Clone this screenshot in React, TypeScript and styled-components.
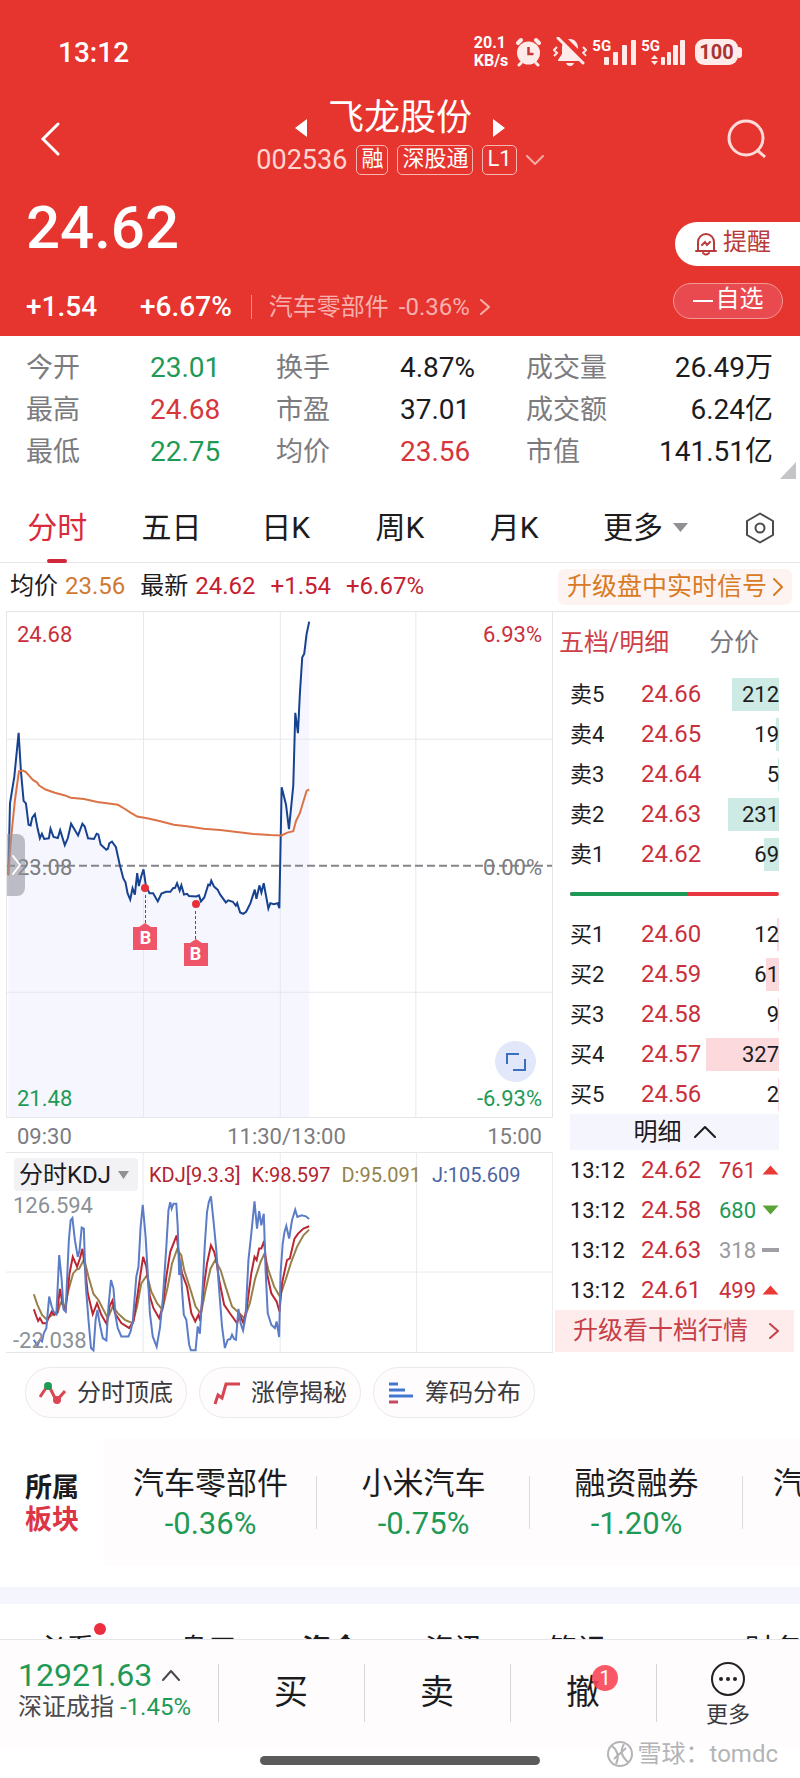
import React from "react";
import styled, { createGlobalStyle } from "styled-components";

const RED = "#c9303c";
const GREEN = "#1f9a56";
const ORANGE = "#cf7a34";
const GRAY = "#7c7c80";
const INK = "#1c1c1e";
const LINE = "#e6e6ea";
const FONT = 'Roboto, "Noto Sans CJK SC", sans-serif';

const GlobalStyle = createGlobalStyle`
  *, *::before, *::after { box-sizing: border-box; }
  body { margin: 0; background: #fff; color: ${INK}; font-family: ${FONT}; }
  button, select { font-family: inherit; font-size: inherit; color: inherit; border: 0; padding: 0; background: none; }
  svg { display: block; flex: none; }
  dl, dd, ul { margin: 0; padding: 0; list-style: none; }
  a { color: inherit; text-decoration: none; }
`;

const Page = styled.main`
  width: 100%;
  overflow: hidden;
  white-space: nowrap;
`;

/* ---------- header ---------- */

const Header = styled.header`
  background: #e6342e;
  color: #fff;
`;

const StatusBar = styled.div`
  height: 96px;
  padding: 8px 58px 0 58px;
  display: flex;
  align-items: center;
  justify-content: space-between;
`;

const Clock = styled.time`
  font-size: 28px;
  font-weight: 500;
`;

const StatusIcons = styled.div`
  display: flex;
  align-items: center;
  gap: 5px;
`;

const NetSpeed = styled.div`
  margin-right: 2px;
  font-size: 16px;
  line-height: 18px;
  font-weight: 700;
`;

const Silent = styled.div`
  margin-left: 6px;
`;

const Signal = styled.div`
  display: flex;
  align-items: flex-start;
  font-size: 15px;
  line-height: 15px;
  font-weight: 700;
  svg { margin-left: -9px; }
`;

const Battery = styled.div`
  display: flex;
  align-items: center;
  margin-left: 5px;
  span {
    background: #ffecea;
    color: #a83430;
    border-radius: 9px;
    width: 43px;
    height: 26px;
    line-height: 26px;
    font-size: 20px;
    font-weight: 700;
    text-align: center;
  }
  &::after {
    content: "";
    width: 4px;
    height: 11px;
    background: #ffecea;
    border-radius: 0 3px 3px 0;
  }
`;

const Nav = styled.nav`
  display: grid;
  grid-template-columns: 100px 1fr 106px;
  align-items: center;
  height: 86px;
`;

const IconButton = styled.button`
  justify-self: center;
  display: block;
`;

const TitleBlock = styled.div`
  display: flex;
  flex-direction: column;
  align-items: center;
  padding-left: 6px;
`;

const TitleRow = styled.div`
  display: flex;
  align-items: center;
  gap: 20px;
  height: 42px;
  button { padding-top: 20px; }
`;

const Title = styled.h1`
  margin: 0;
  font-size: 36px;
  line-height: 42px;
  font-weight: 400;
`;

const CodeRow = styled.div`
  display: flex;
  align-items: center;
  gap: 9px;
  height: 42px;
  font-size: 27px;
  color: #ffd5d2;
`;

const Tag = styled.span`
  height: 30px;
  padding: 0 4px;
  border: 1px solid #f7b5b1;
  border-radius: 5px;
  font-size: 22px;
  line-height: 26px;
  color: #fff;
`;

const Quote = styled.section`
  display: flex;
  justify-content: space-between;
`;

const Price = styled.div`
  height: 92px;
  padding-left: 26px;
  font-size: 60px;
  line-height: 92px;
  font-weight: 500;
`;

const ChangeRow = styled.div`
  display: flex;
  align-items: center;
  height: 62px;
  padding: 3px 0 0 26px;
  font-size: 28px;
  font-weight: 500;
  gap: 43px;
`;

const Sector = styled.a`
  display: flex;
  align-items: center;
  gap: 10px;
  margin-left: -24px;
  padding-left: 17px;
  border-left: 1px solid #f08e89;
  line-height: 24px;
  font-size: 24px;
  font-weight: 400;
  color: #f9b0ac;
`;

const QuoteActions = styled.div`
  display: flex;
  flex-direction: column;
  align-items: flex-end;
  gap: 17px;
  padding-top: 40px;
`;

const AlertButton = styled.button`
  display: flex;
  align-items: center;
  gap: 5px;
  width: 125px;
  height: 44px;
  padding-left: 19px;
  border-radius: 22px 0 0 22px;
  background: #fff;
  color: #b93a3a;
  font-size: 24px;
  line-height: 24px;
  span { padding-bottom: 4px; }
`;

const WatchButton = styled.button`
  display: flex;
  align-items: center;
  justify-content: center;
  gap: 3px;
  width: 110px;
  height: 36px;
  margin-right: 17px;
  border: 1px solid #f29a96;
  border-radius: 18px;
  background: #e84a50;
  color: #fff;
  font-size: 24px;
  line-height: 24px;
  span { padding-bottom: 4px; }
`;

/* ---------- statistics ---------- */

const Stats = styled.dl`
  position: relative;
  display: grid;
  grid-template-columns: 250fr 250fr 247fr;
  padding: 11px 27px 12px 26px;
`;

const Stat = styled.div<{ $spread?: boolean }>`
  display: flex;
  justify-content: ${(p) => (p.$spread ? "space-between" : "flex-start")};
  height: 42px;
  line-height: 42px;
  font-size: 27px;
  dt { width: ${(p) => (p.$spread ? "auto" : "124px")}; color: ${GRAY}; }
`;

const Value = styled.dd<{ $color?: string }>`
  color: ${(p) => p.$color || INK};
  font-size: 28px;
`;

const Corner = styled.svg`
  position: absolute;
  right: 4px;
  bottom: 6px;
`;

/* ---------- period tabs ---------- */

const Periods = styled.div`
  display: grid;
  grid-template-columns: repeat(5, 114fr) 148fr 80fr;
  height: 78px;
  border-bottom: 1px solid ${LINE};
`;

const Period = styled.button<{ $active?: boolean }>`
  position: relative;
  display: flex;
  align-items: center;
  justify-content: center;
  gap: 10px;
  padding-top: 2px;
  font-size: 30px;
  color: ${(p) => (p.$active ? "#d9293c" : INK)};
  svg { margin-top: 6px; }
  &::after {
    content: "";
    display: ${(p) => (p.$active ? "block" : "none")};
    position: absolute;
    bottom: -1px;
    width: 20px;
    height: 4px;
    border-radius: 2px;
    background: #d0283a;
  }
`;

const InfoBar = styled.div`
  display: flex;
  align-items: center;
  justify-content: space-between;
  height: 48px;
  padding: 0 8px 0 10px;
  font-size: 24px;
`;

const Readings = styled.div`
  display: flex;
  align-items: baseline;
  gap: 15px;
  padding-bottom: 2px;
  line-height: 32px;
`;

const Reading = styled.span<{ $color?: string }>`
  color: ${(p) => p.$color || "#c5202f"};
  b { font-weight: 400; color: ${INK}; margin-right: 7px; }
`;

const SignalLink = styled.a`
  display: flex;
  align-items: center;
  gap: 6px;
  height: 36px;
  padding: 0 9px;
  border-radius: 6px;
  background: #fdf4f2;
  color: #d97a25;
  font-size: 25px;
  line-height: 32px;
`;

/* ---------- chart area ---------- */

const Market = styled.section`
  display: grid;
  grid-template-columns: minmax(0, 553fr) minmax(0, 247fr);
`;

const Charts = styled.div`
  padding-left: 6px;
`;

const PriceChart = styled.div`
  position: relative;
  height: 507px;
  border: 1px solid ${LINE};
  > svg { width: 100%; height: 100%; }
`;

const ChartLabel = styled.span<{ $color: string; $top: string; $right?: boolean }>`
  position: absolute;
  top: ${(p) => p.$top};
  ${(p) => (p.$right ? "right: 10px;" : "left: 10px;")}
  color: ${(p) => p.$color};
  font-size: 22px;
  line-height: 28px;
`;

const Buy = styled.span<{ $left: string; $top: string }>`
  position: absolute;
  left: ${(p) => p.$left};
  top: ${(p) => p.$top};
  display: flex;
  flex-direction: column;
  align-items: center;
  width: 24px;
  margin-left: -12px;
  i {
    width: 8px;
    height: 8px;
    border-radius: 50%;
    background: #e8303a;
  }
  u {
    height: 28px;
    margin-top: 3px;
    border-left: 1px dashed #a03050;
  }
  svg { fill: #ee5568; }
  b {
    width: 24px;
    height: 23px;
    background: #ee5568;
    color: #fff;
    font-size: 18px;
    line-height: 22px;
    text-align: center;
  }
`;

const Handle = styled.button`
  position: absolute;
  left: 0;
  top: 222px;
  display: flex;
  align-items: center;
  justify-content: center;
  width: 18px;
  height: 62px;
  border-radius: 0 8px 8px 0;
  background: rgba(150, 150, 160, 0.6);
`;

const Expand = styled.button`
  position: absolute;
  right: 16px;
  bottom: 35px;
  display: flex;
  align-items: center;
  justify-content: center;
  width: 41px;
  height: 41px;
  border-radius: 50%;
  background: #e2e8f9;
`;

const Axis = styled.div`
  display: grid;
  grid-template-columns: 1fr 1fr 1fr;
  height: 35px;
  padding: 0 11px;
  border-bottom: 1px solid ${LINE};
  font-size: 22px;
  line-height: 37px;
  color: ${GRAY};
  span:nth-child(2) { text-align: center; padding-left: 14px; }
  span:nth-child(3) { text-align: right; }
`;

const KdjChart = styled.div`
  position: relative;
  height: 200px;
  border-bottom: 1px solid ${LINE};
  > svg { width: 100%; height: 100%; }
  > ${ChartLabel} { left: 7px; }
`;

const KdjHead = styled.div`
  position: absolute;
  left: 8px;
  top: 5px;
  display: flex;
  align-items: center;
  gap: 11px;
  font-size: 20px;
`;

const KdjPicker = styled.button`
  display: flex;
  align-items: center;
  gap: 7px;
  height: 33px;
  width: 124px;
  padding: 0 5px;
  border-radius: 4px;
  background: #f2f1f3;
  font-size: 24px;
  line-height: 30px;
`;

const KdjValue = styled.span<{ $color: string }>`
  color: ${(p) => p.$color};
`;

/* ---------- order book ---------- */

const Book = styled.div`
  border-top: 1px solid ${LINE};
  padding: 0 21px 0 17px;
`;

const BookTabs = styled.div`
  display: flex;
  gap: 40px;
  height: 62px;
  margin-left: -11px;
  padding-bottom: 6px;
  font-size: 25px;
`;

const BookTab = styled.button<{ $active?: boolean }>`
  color: ${(p) => (p.$active ? "#cf3f48" : "#77777b")};
`;

const Table = styled.table`
  width: 100%;
  table-layout: fixed;
  border-collapse: collapse;
  td { height: 40px; padding: 0; line-height: 33px; }
`;

const Side = styled.td`
  width: 71px;
  font-size: 22px;
`;

const PriceCell = styled.td`
  width: 73px;
  font-size: 24px;
  color: ${RED};
`;

const Volume = styled.td`
  font-size: 22px;
  text-align: right;
`;

const Bar = styled.div<{ $buy?: boolean }>`
  background: linear-gradient(${(p) => (p.$buy ? "#fcd9dc, #fcd9dc" : "#cdeae4, #cdeae4")}) right / var(--size) 100% no-repeat;
  margin-left: -14px;
`;

const Ratio = styled.div`
  display: flex;
  height: 4px;
  margin: 18px 0;
  border-radius: 2px;
  overflow: hidden;
  background: #e8383f;
  &::before { content: ""; width: 56%; background: ${GREEN}; }
`;

const DetailToggle = styled.button`
  display: flex;
  align-items: center;
  justify-content: center;
  gap: 12px;
  width: 100%;
  height: 36px;
  background: #f5f5fd;
  font-size: 24px;
  line-height: 32px;
`;

const TimeCell = styled.td`
  width: 71px;
  font-size: 22px;
`;

const Trade = styled.div<{ $color: string }>`
  display: flex;
  align-items: center;
  justify-content: flex-end;
  gap: 6px;
  color: ${(p) => p.$color};
  font-size: 22px;
`;

const DepthLink = styled.a`
  display: flex;
  align-items: center;
  justify-content: space-between;
  height: 42px;
  margin: 0 -15px;
  padding: 0 15px 0 18px;
  background: #feeced;
  color: #c63f49;
  font-size: 25px;
  line-height: 38px;
`;

/* ---------- tools and sectors ---------- */

const Tools = styled.div`
  display: flex;
  gap: 12px;
  padding: 14px 25px 20px;
`;

const Tool = styled.button`
  display: flex;
  align-items: center;
  gap: 11px;
  height: 51px;
  padding: 0 13px;
  border: 1px solid #ece8ec;
  border-radius: 26px;
  background: #fefcfd;
  color: #3a3a3e;
  font-size: 24px;
  line-height: 48px;
`;

const Sectors = styled.section`
  display: flex;
  height: 128px;
  margin-bottom: 21px;
`;

const SectorsTitle = styled.h2`
  flex: none;
  width: 104px;
  margin: 0;
  padding: 34px 0 0 25px;
  font-size: 27px;
  line-height: 32px;
  font-weight: 700;
  span { display: block; color: #dc3545; }
`;

const SectorList = styled.ul`
  display: flex;
  flex: 1;
  min-width: 0;
  overflow: hidden;
  background: #fefcfd;
`;

const SectorItem = styled.li`
  flex: 0 0 213px;
  display: flex;
  flex-direction: column;
  align-items: center;
  padding-top: 26px;
  background: linear-gradient(#dcdce0, #dcdce0) right 38px / 1px 53px no-repeat;
  font-size: 31px;
  line-height: 40px;
  &:last-child { align-items: flex-start; padding-left: 30px; }
`;

const SectorChange = styled.span`
  color: ${GREEN};
  font-size: 31px;
`;

const Divider = styled.div`
  height: 17px;
  background: #f5f5fd;
`;

const Sections = styled.div`
  display: flex;
  align-items: flex-start;
  height: 35px;
  overflow: hidden;
  padding: 30px 0 0 37px;
`;

const Section = styled.button<{ $active?: boolean; $gap?: number }>`
  position: relative;
  flex: none;
  margin-right: ${(p) => p.$gap || 65}px;
  font-size: 29px;
  line-height: 32px;
  font-weight: ${(p) => (p.$active ? 700 : 400)};
`;

const SectionDot = styled.i`
  position: absolute;
  right: -11px;
  top: -11px;
  width: 12px;
  height: 12px;
  border-radius: 50%;
  background: #ec2f40;
`;

/* ---------- trade bar ---------- */

const TradeBar = styled.footer`
  display: grid;
  grid-template-columns: 218fr 146fr 146fr 146fr 144fr;
  height: 109px;
  border-top: 1px solid ${LINE};
  background: #fefcfd;
`;

const IndexButton = styled.button`
  display: flex;
  flex-direction: column;
  justify-content: flex-start;
  padding: 18px 0 0 18px;
  text-align: left;
`;

const IndexValue = styled.span`
  display: flex;
  align-items: center;
  gap: 10px;
  color: ${GREEN};
  font-size: 32px;
  line-height: 34px;
`;

const IndexName = styled.span`
  display: block;
  color: #4a4a4e;
  font-size: 24px;
  line-height: 30px;
  em { font-style: normal; color: ${GREEN}; margin-left: 6px; }
`;

const Action = styled.button`
  background: linear-gradient(#d6d6da, #d6d6da) left 24px / 1px 58px no-repeat;
  padding-bottom: 9px;
  font-size: 34px;
`;

const Badged = styled.span`
  position: relative;
`;

const Badge = styled.span`
  position: absolute;
  right: -18px;
  top: -7px;
  width: 26px;
  height: 26px;
  border-radius: 50%;
  background: rgba(250, 70, 86, 0.9);
  color: #fff;
  font-size: 20px;
  line-height: 26px;
  text-align: center;
`;

const More = styled.button`
  display: flex;
  flex-direction: column;
  align-items: center;
  gap: 4px;
  padding-top: 21px;
  background: linear-gradient(#d6d6da, #d6d6da) left 24px / 1px 58px no-repeat;
  color: #3a3a3e;
  font-size: 22px;
  line-height: 28px;
`;

const HomeArea = styled.div`
  position: relative;
  height: 30px;
  padding-top: 8px;
`;

const HomeBar = styled.div`
  width: 35%;
  height: 9px;
  margin: 0 auto;
  border-radius: 5px;
  background: #5b5b5b;
`;

const Watermark = styled.div`
  position: absolute;
  right: 22px;
  bottom: 8px;
  display: flex;
  align-items: center;
  gap: 4px;
  color: #b4b4b6;
  font-size: 24px;
  line-height: 32px;
`;

/* ---------- drawings ---------- */

type ChevronProps = { w: number; h: number; d: "left" | "right" | "up" | "down"; color?: string; sw?: number };

const Chevron = ({ w, h, d, color = "currentColor", sw = 2 }: ChevronProps) => {
  const pts = {
    left: `${w - 1},1 1,${h / 2} ${w - 1},${h - 1}`,
    right: `1,1 ${w - 1},${h / 2} 1,${h - 1}`,
    up: `1,${h - 1} ${w / 2},1 ${w - 1},${h - 1}`,
    down: `1,1 ${w / 2},${h - 1} ${w - 1},1`,
  }[d];
  return (
    <svg width={w} height={h} fill="none" stroke={color} strokeWidth={sw}>
      <polyline points={pts} strokeLinecap="round" strokeLinejoin="round" />
    </svg>
  );
};

const Caret = ({ w, h, color }: { w: number; h: number; color: string }) => (
  <svg width={w} height={h} fill={color}>
    <path d={`M0 0H${w}L${w / 2} ${h}Z`} />
  </svg>
);

const Arrow = ({ dir }: { dir: string }) => (
  <svg width="17" height="10">
    {dir === "up" && <path d="M8.500 .5L16.500 9.500H.5Z" fill="#ea3a34" />}
    {dir === "down" && <path d="M.5 .5H16.500L8.500 9.500Z" fill="#5aa336" />}
    {dir === "flat" && <rect y="3" width="17" height="4" fill="#a0a0a4" />}
  </svg>
);

const Alarm = () => (
  <svg width="27" height="30" viewBox="0 0 27 30">
    <g stroke="#ffecea" strokeWidth="4" strokeLinecap="round">
      <path d="M3 6L6 3M24 6L21 3" />
      <path d="M6 26L4 28M21 26L23 28" strokeWidth="3" />
    </g>
    <circle cx="13.500" cy="16" r="11.500" fill="#ffecea" />
    <path d="M13.500 10V17H18.500" fill="none" stroke="#c23a36" strokeWidth="2.500" />
  </svg>
);

const Muted = () => (
  <svg width="34" height="30" viewBox="0 0 34 30">
    <path d="M17 2C22 2 25 6 25 11V17L29 23V24H5V23L9 17V11C9 6 12 2 17 2Z" fill="#ffecea" />
    <path d="M13 26H21Q20 29 17 29T13 26Z" fill="#ffecea" />
    <path d="M4 10L1 13L4 16L1 19M30 10L33 13L30 16L33 19" fill="none" stroke="#ffecea" strokeWidth="2" />
    <path d="M7 -1L33 25" stroke="#e6342e" strokeWidth="7" />
    <path d="M5 1L30 26" stroke="#ffecea" strokeWidth="3" strokeLinecap="round" />
  </svg>
);

const Bars = ({ small }: { small?: boolean }) => (
  <svg width="34" height="27" viewBox="0 0 34 27" fill="#ffecea">
    {small ? (
      <>
        <path d="M0 20L3.500 16L7 20ZM0 22L3.500 26L7 22Z" />
        <rect x="10" y="18" width="4" height="8" rx="1" />
        <rect x="16" y="13" width="4" height="13" rx="1" />
        <rect x="22" y="6" width="5" height="20" rx="1" />
        <rect x="29" y="1" width="5" height="25" rx="1" />
      </>
    ) : (
      <>
        <rect x="2" y="18" width="5" height="8" rx="1" />
        <rect x="11" y="13" width="5" height="13" rx="1" />
        <rect x="20" y="6" width="5" height="20" rx="1" />
        <rect x="29" y="1" width="5" height="25" rx="1" />
      </>
    )}
  </svg>
);

const PRICE_LINE =
  "22,770 27,570 40,495 53,372 60,480 68,563 75,570 83,630 89,632 94,610 102,600 110,640 117,668 123,655 130,670 144,668 149,641 158,664 171,667 178,645 192,687 201,668 211,627 232,660 245,627 252,635 262,668 280,670 288,655 293,657 300,685 317,700 322,697 326,682 334,677 346,693 357,740 368,780 375,792 381,822 389,840 396,808 403,826 410,766 415,802 422,775 429,755 436,800 447,822 458,822 472,845 483,823 497,818 510,818 518,808 524,807 530,794 538,815 543,800 551,826 560,824 566,830 588,831 596,828 602,845 612,834 624,798 629,800 633,787 641,803 652,812 660,826 677,848 684,842 698,846 707,857 711,850 720,876 729,880 738,874 751,850 764,812 769,838 778,800 784,820 791,794 805,865 811,850 821,853 833,850 838,864 845,525 858,573 867,642 880,520 886,316 894,373 900,260 907,160 913,150 920,95 928,60";

const AVERAGE_LINE =
  "22,772 30,670 42,560 54,480 66,478 75,482 96,504 108,511 115,520 134,531 162,540 190,547 210,554 250,558 290,566 330,571 352,574 372,585 390,596 410,607 440,612 480,620 520,630 560,634 610,641 660,645 710,650 760,656 810,659 845,660 862,652 880,648 888,620 900,597 912,560 920,535 928,531";

const KDJ_J =
  "95,600 105,618 112,600 118,605 123,580 130,565 138,470 145,500 150,515 158,523 166,345 173,420 178,508 184,515 193,300 198,240 203,233 210,300 218,350 223,330 229,262 235,265 240,430 248,540 255,625 262,632 268,540 273,510 280,555 288,595 298,602 304,500 311,420 318,445 324,530 330,565 340,590 360,590 366,575 372,545 382,410 388,380 394,260 400,193 408,290 414,400 420,520 428,590 439,621 448,565 456,480 466,320 472,210 477,185 481,205 486,190 494,190 498,260 502,405 506,360 510,450 515,525 522,540 530,615 535,632 548,632 554,560 560,582 568,440 574,310 580,215 585,185 591,168 598,240 606,330 614,450 622,560 630,625 638,600 645,598 650,585 656,598 661,600 668,507 674,550 681,572 688,530 696,360 704,280 713,183 720,265 726,212 732,255 739,220 744,390 750,520 760,555 770,565 775,545 782,592 786,400 792,310 797,275 802,257 810,295 818,240 827,208 833,230 845,225 857,228 866,236";
const KDJ_K =
  "95,508 102,530 107,543 112,535 120,550 130,550 136,535 145,515 152,525 160,520 168,447 176,495 184,510 195,400 204,350 216,380 224,355 231,326 238,380 246,460 260,523 272,490 284,525 299,553 307,500 315,482 322,520 340,550 362,565 374,545 386,460 394,400 401,350 410,380 420,470 430,505 446,535 456,500 466,410 477,335 486,310 495,285 502,350 510,400 524,440 536,520 547,545 556,525 561,543 570,450 580,370 591,315 600,335 606,360 614,420 628,495 644,520 664,550 672,525 682,550 692,500 704,400 713,350 719,360 726,325 732,325 740,302 748,400 760,460 775,485 783,515 790,430 804,360 812,355 825,295 835,280 850,265 866,258";
const KDJ_D =
  "95,463 105,495 118,525 130,538 150,522 162,518 170,488 182,500 192,450 205,400 215,388 222,386 236,357 248,410 262,462 276,480 290,510 302,535 316,500 330,520 350,540 372,550 384,500 396,430 412,405 424,455 440,490 455,510 470,440 482,370 496,328 508,345 516,390 534,450 548,500 563,522 576,450 590,385 603,360 618,390 632,440 650,500 685,535 700,490 715,415 730,365 741,340 752,390 768,440 784,470 800,420 816,365 832,320 850,285 866,268";

const thin = { vectorEffect: "non-scaling-stroke" as const };

/* ---------- data ---------- */

const STATS: [string, string, string?][] = [
  ["今开", "23.01", GREEN],
  ["换手", "4.87%"],
  ["成交量", "26.49万"],
  ["最高", "24.68", "#d5373c"],
  ["市盈", "37.01"],
  ["成交额", "6.24亿"],
  ["最低", "22.75", GREEN],
  ["均价", "23.56", "#d5373c"],
  ["市值", "141.51亿"],
];

type Level = [string, string, number, number];
const SELL: Level[] = [
  ["卖5", "24.66", 212, 47],
  ["卖4", "24.65", 19, 3],
  ["卖3", "24.64", 5, 1],
  ["卖2", "24.63", 231, 51],
  ["卖1", "24.62", 69, 15],
];
const BUY: Level[] = [
  ["买1", "24.60", 12, 2],
  ["买2", "24.59", 61, 13],
  ["买3", "24.58", 9, 1],
  ["买4", "24.57", 327, 73],
  ["买5", "24.56", 2, 1],
];
const TRADES = [
  ["24.62", "761", "up", RED],
  ["24.58", "680", "down", GREEN],
  ["24.63", "318", "flat", "#9a9a9e"],
  ["24.61", "499", "up", RED],
];

const Levels = ({ rows, buy }: { rows: Level[]; buy?: boolean }) => (
  <Table>
    <tbody>
      {rows.map(([side, price, volume, size]) => (
        <tr key={side}>
          <Side>{side}</Side>
          <PriceCell>{price}</PriceCell>
          <Volume>
            <Bar $buy={buy} style={{ "--size": `${size}px` } as React.CSSProperties}>
              {volume}
            </Bar>
          </Volume>
        </tr>
      ))}
    </tbody>
  </Table>
);

const BuyMark = ({ left, top }: { left: string; top: string }) => (
  <Buy $left={left} $top={top}>
    <i />
    <u />
    <svg width="12" height="4"><path d="M6 0L12 4H0Z" /></svg>
    <b>B</b>
  </Buy>
);

export default function App() {
  return (
    <Page>
      <GlobalStyle />
      <Header>
        <StatusBar>
          <Clock>13:12</Clock>
          <StatusIcons>
            <NetSpeed>
              20.1
              <br />
              KB/s
            </NetSpeed>
            <Alarm />
            <Silent><Muted /></Silent>
            <Signal>5G<Bars /></Signal>
            <Signal>5G<Bars small /></Signal>
            <Battery><span>100</span></Battery>
          </StatusIcons>
        </StatusBar>
        <Nav>
          <IconButton aria-label="返回">
            <svg width="20" height="34" fill="none" stroke="#fff" strokeWidth="3">
              <polyline points="18,2 3,17 18,32" strokeLinecap="round" />
            </svg>
          </IconButton>
          <TitleBlock>
            <TitleRow>
              <button aria-label="上一只">
                <svg width="14" height="18"><path d="M13 0V18L1 9Z" fill="#fff" /></svg>
              </button>
              <Title>飞龙股份</Title>
              <button aria-label="下一只">
                <svg width="14" height="18"><path d="M1 0V18L13 9Z" fill="#fff" /></svg>
              </button>
            </TitleRow>
            <CodeRow>
              002536 <Tag>融</Tag><Tag>深股通</Tag><Tag>L1</Tag>
              <Chevron w={18} h={10} d="down" color="#f7aaa6" />
            </CodeRow>
          </TitleBlock>
          <IconButton aria-label="搜索">
            <svg width="40" height="40" fill="none" stroke="#ffdcda" strokeWidth="3">
              <circle cx="19" cy="19" r="17" />
              <path d="M30 31L38 38" />
            </svg>
          </IconButton>
        </Nav>
        <Quote>
          <div>
            <Price>24.62</Price>
            <ChangeRow>
              <span>+1.54</span>
              <span>+6.67%</span>
              <Sector href="#sector">
                汽车零部件 <span>-0.36%</span>
                <Chevron w={10} h={16} d="right" />
              </Sector>
            </ChangeRow>
          </div>
          <QuoteActions>
            <AlertButton>
              <svg width="24" height="24" fill="none" stroke="#b93a3a" strokeWidth="2" strokeLinecap="round">
                <path d="M2 19H22M4 18V10a8 8 0 0 1 16 0V18M9 21q3 3 6 0" />
                <path d="M8 13l3-3 2 3 3-3" />
              </svg>
              <span>提醒</span>
            </AlertButton>
            <WatchButton>
              <svg width="20" height="3"><rect width="20" height="2" fill="#fff" /></svg>
              <span>自选</span>
            </WatchButton>
          </QuoteActions>
        </Quote>
      </Header>

      <Stats>
        {STATS.map(([label, value, color], i) => (
          <Stat key={label} $spread={i % 3 === 2}>
            <dt>{label}</dt>
            <Value $color={color}>{value}</Value>
          </Stat>
        ))}
        <Corner width="16" height="17"><path d="M16 0V17H0Z" fill="#c4c4c8" /></Corner>
      </Stats>

      <Periods>
        <Period $active>分时</Period>
        <Period>五日</Period>
        <Period>日K</Period>
        <Period>周K</Period>
        <Period>月K</Period>
        <Period>更多 <Caret w={15} h={9} color="#8f8f94" /></Period>
        <Period aria-label="设置">
          <svg width="32" height="32" fill="none" stroke="#4a4a4e" strokeWidth="2">
            <path d="M16 1.500L29 9V23L16 30.500L3 23V9Z" strokeLinejoin="round" />
            <circle cx="16" cy="16" r="4.500" />
          </svg>
        </Period>
      </Periods>

      <InfoBar>
        <Readings>
          <Reading $color={ORANGE}><b>均价</b>23.56</Reading>
          <Reading><b>最新</b>24.62</Reading>
          <Reading>+1.54</Reading>
          <Reading>+6.67%</Reading>
        </Readings>
        <SignalLink href="#signal">
          升级盘中实时信号 <Chevron w={10} h={18} d="right" />
        </SignalLink>
      </InfoBar>

      <Market>
        <Charts>
          <PriceChart>
            <svg viewBox="18 33 1641 1417" preserveAspectRatio="none" fill="none">
              <polygon points={`22,1450 ${PRICE_LINE} 928,1450`} fill="#f6f6fe" />
              <path
                d="M429 33V1450M841 33V1450M1249 33V1450M18 390H1659M18 1100H1659"
                stroke="#e6e8ee"
                style={thin}
              />
              <path d="M18 745H1659" stroke="#85858a" strokeWidth="2" strokeDasharray="8 4" style={thin} />
              <polyline points={PRICE_LINE} stroke="#17428f" strokeWidth="2" style={thin} />
              <polyline points={AVERAGE_LINE} stroke="#dc7347" strokeWidth="2" style={thin} />
            </svg>
            <ChartLabel $color={RED} $top="9px">24.68</ChartLabel>
            <ChartLabel $color={RED} $top="9px" $right>6.93%</ChartLabel>
            <ChartLabel $color={GRAY} $top="242px">23.08</ChartLabel>
            <ChartLabel $color={GRAY} $top="242px" $right>0.00%</ChartLabel>
            <ChartLabel $color={GREEN} $top="473px">21.48</ChartLabel>
            <ChartLabel $color={GREEN} $top="473px" $right>-6.93%</ChartLabel>
            <BuyMark left="25.400%" top="272px" />
            <BuyMark left="34.600%" top="288px" />
            <Handle aria-label="展开"><Chevron w={9} h={20} d="right" color="#fff" /></Handle>
            <Expand aria-label="全屏">
              <svg width="20" height="20" fill="none" stroke="#3a70bd" strokeWidth="2">
                <path d="M1 12V2H13M7 18H19V7" />
              </svg>
            </Expand>
          </PriceChart>
          <Axis>
            <span>09:30</span>
            <span>11:30/13:00</span>
            <span>15:00</span>
          </Axis>
          <KdjChart>
            <svg viewBox="17 37 1532 600" preserveAspectRatio="none" fill="none">
              <path
                d="M401 37V637M785 37V637M1167 37V637M1548 37V637M17 396H1549"
                stroke="#e9eaee"
                style={thin}
              />
              <polyline points={KDJ_D} stroke="#978149" strokeWidth="2" style={thin} />
              <polyline points={KDJ_K} stroke="#bb2631" strokeWidth="2" style={thin} />
              <polyline points={KDJ_J} stroke="#5b7cc6" strokeWidth="2" style={thin} />
            </svg>
            <KdjHead>
              <KdjPicker>分时KDJ <Caret w={11} h={8} color="#8f8f94" /></KdjPicker>
              <KdjValue $color="#b3232d">KDJ[9.3.3]</KdjValue>
              <KdjValue $color="#b3232d">K:98.597</KdjValue>
              <KdjValue $color="#94834a">D:95.091</KdjValue>
              <KdjValue $color="#4c65a5">J:105.609</KdjValue>
            </KdjHead>
            <ChartLabel $color="#8b9197" $top="39px">126.594</ChartLabel>
            <ChartLabel $color="#8b9197" $top="174px">-22.038</ChartLabel>
          </KdjChart>
        </Charts>

        <Book>
          <BookTabs>
            <BookTab $active>五档/明细</BookTab>
            <BookTab>分价</BookTab>
          </BookTabs>
          <Levels rows={SELL} />
          <Ratio />
          <Levels rows={BUY} buy />
          <DetailToggle>明细 <Chevron w={22} h={12} d="up" /></DetailToggle>
          <Table>
            <tbody>
              {TRADES.map(([price, volume, dir, color]) => (
                <tr key={price}>
                  <TimeCell>13:12</TimeCell>
                  <PriceCell>{price}</PriceCell>
                  <td><Trade $color={color}>{volume}<Arrow dir={dir} /></Trade></td>
                </tr>
              ))}
            </tbody>
          </Table>
          <DepthLink href="#depth">
            升级看十档行情 <Chevron w={10} h={16} d="right" />
          </DepthLink>
        </Book>
      </Market>

      <Tools>
        <Tool>
          <svg width="27" height="24" fill="none" stroke="#dc4552" strokeWidth="3">
            <path d="M1 16L7 7M11 7L16 17M19 18L26 10" />
            <circle cx="9" cy="5" r="4" fill="#1f9a56" stroke="none" />
            <circle cx="18" cy="19" r="4" fill="#dc4552" stroke="none" />
          </svg>
          分时顶底
        </Tool>
        <Tool>
          <svg width="27" height="24" fill="none" stroke="#d64552" strokeWidth="3">
            <path d="M2 23L5 14L9 17L13 3H27" />
          </svg>
          涨停揭秘
        </Tool>
        <Tool>
          <svg width="27" height="24" fill="none" strokeWidth="3">
            <path d="M2 3H11M2 9H18M2 15H26" stroke="#4377cf" />
            <path d="M2 21H11" stroke="#c44a62" />
          </svg>
          筹码分布
        </Tool>
      </Tools>

      <Sectors>
        <SectorsTitle>所属<span>板块</span></SectorsTitle>
        <SectorList>
          <SectorItem>汽车零部件<SectorChange>-0.36%</SectorChange></SectorItem>
          <SectorItem>小米汽车<SectorChange>-0.75%</SectorChange></SectorItem>
          <SectorItem>融资融券<SectorChange>-1.20%</SectorChange></SectorItem>
          <SectorItem>汽</SectorItem>
        </SectorList>
      </Sectors>
      <Divider />
      <Sections>
        <Section $gap={84}>必看<SectionDot /></Section>
        <Section>盘口</Section>
        <Section $active>资金</Section>
        <Section>资讯</Section>
        <Section $gap={106}>笔记17</Section>
        <Section>财务</Section>
      </Sections>

      <TradeBar>
        <IndexButton>
          <IndexValue>12921.63 <Chevron w={18} h={11} d="up" color="#4a4a4e" /></IndexValue>
          <IndexName>深证成指<em>-1.45%</em></IndexName>
        </IndexButton>
        <Action>买</Action>
        <Action>卖</Action>
        <Action><Badged>撤<Badge>1</Badge></Badged></Action>
        <More>
          <svg width="36" height="36" fill="none" stroke="#222" strokeWidth="2">
            <circle cx="18" cy="18" r="16" />
            <g fill="#222" stroke="none">
              <circle cx="11" cy="18" r="2" />
              <circle cx="18" cy="18" r="2" />
              <circle cx="25" cy="18" r="2" />
            </g>
          </svg>
          更多
        </More>
      </TradeBar>
      <HomeArea>
        <HomeBar />
        <Watermark>
          <svg width="28" height="28" fill="none" stroke="#b4b4b6" strokeWidth="2">
            <circle cx="14" cy="14" r="12" />
            <path d="M6 6Q15 13 10 24M18 4Q12 14 22 22M8 19L20 8" />
          </svg>
          <span>雪球：tomdc</span>
        </Watermark>
      </HomeArea>
    </Page>
  );
}
